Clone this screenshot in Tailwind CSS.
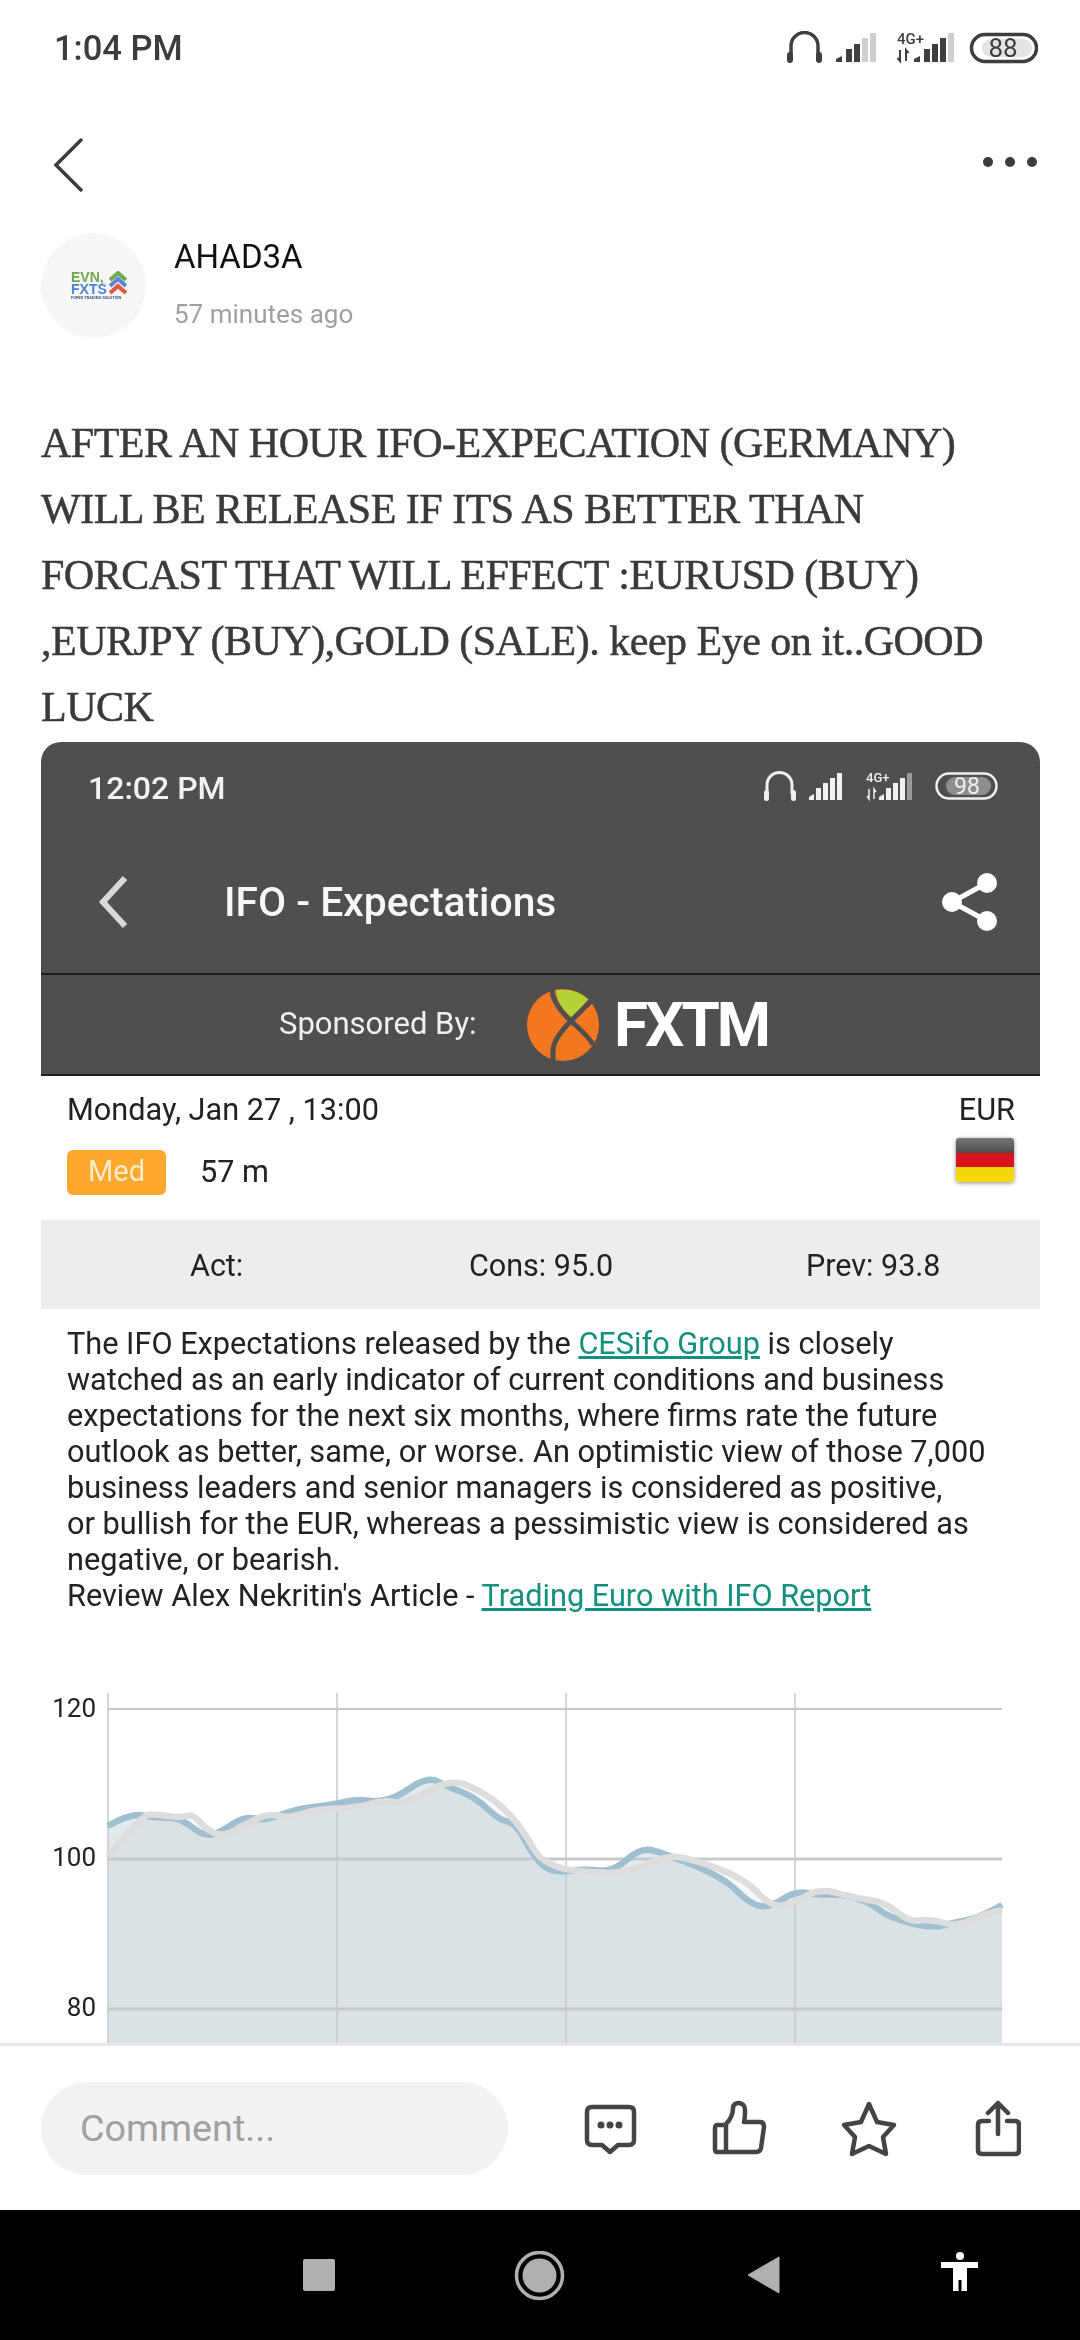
<!DOCTYPE html>
<html lang="en">
<head>
<meta charset="utf-8">
<title>Post</title>
<script src="https://cdn.jsdelivr.net/npm/@tailwindcss/browser@4"></script>
</head>
<body class="bg-white">
<div class="w-[1080px] h-[2340px] flex flex-col overflow-hidden font-['Roboto',sans-serif] text-[#222]">
  <main class="h-[2043px] overflow-hidden">
    <!-- status bar -->
    <div class="h-[96px] flex items-center justify-between pl-[54px] pr-[42px]">
      <span class="text-[34.500px] font-medium text-[#3c3c3c] pt-[2px]">1:04 PM</span>
      <div class="flex items-center">
        <svg width="251" height="34" viewBox="787 31 251 34" class="text-[#3e3e3e]">
          <path d="M791 56V46a13.500 13.500 0 0 1 27 0V56" fill="none" stroke="currentColor" stroke-width="3.500"/>
          <rect x="787" y="52" width="6" height="11" rx="3" fill="currentColor"/>
          <rect x="816" y="52" width="6" height="11" rx="3" fill="currentColor"/>
          <path d="M836 62v-3l6-3v6z" fill="currentColor"/>
          <rect x="846" y="49" width="6" height="13" fill="currentColor"/>
          <rect x="854" y="44" width="6" height="18" fill="currentColor"/>
          <rect x="862" y="38" width="6" height="24" fill="#cfcfcf"/>
          <rect x="870" y="33" width="6" height="29" fill="#cfcfcf"/>
          <text x="897" y="44" font-size="15" font-weight="500" fill="currentColor" font-family="Roboto">4G+</text>
          <path d="M900 50v11l-2.500-3M906 61V50l2.500 3" fill="none" stroke="currentColor" stroke-width="2"/>
          <path d="M914 62v-3l6-3v6z" fill="currentColor"/>
          <rect x="924" y="49" width="6" height="13" fill="currentColor"/>
          <rect x="932" y="44" width="6" height="18" fill="currentColor"/>
          <rect x="940" y="38" width="6" height="24" fill="currentColor"/>
          <rect x="948" y="33" width="6" height="29" fill="#cfcfcf"/>
          <rect x="971.500" y="34.500" width="65" height="27" rx="13.500" fill="none" stroke="currentColor" stroke-width="3.500"/>
          <rect x="982" y="39" width="50" height="18" rx="9" fill="#e4e4e4"/>
          <text x="1003" y="57" font-size="26" text-anchor="middle" fill="currentColor" font-family="Roboto">88</text>
        </svg>
      </div>
    </div>
    <!-- nav -->
    <div class="h-[137px] flex items-center justify-between pl-[53px] pr-[43px]">
      <svg width="30" height="54" viewBox="0 0 30 54"><path d="M28 2 3 27l25 25" fill="none" stroke="#3c3c3c" stroke-width="3.500" stroke-linecap="round"/></svg>
      <div class="flex gap-[12px] -mt-[6px]">
        <span class="w-[10px] h-[10px] rounded-full bg-[#3c3c3c]"></span>
        <span class="w-[10px] h-[10px] rounded-full bg-[#3c3c3c]"></span>
        <span class="w-[10px] h-[10px] rounded-full bg-[#3c3c3c]"></span>
      </div>
    </div>
    <!-- author -->
    <div class="h-[105px] flex pl-[41px]">
      <div class="w-[105px] h-[105px] rounded-full bg-[#f7f7f7] flex flex-col items-start pl-[30px] pt-[38px]">
        <div class="flex items-center gap-[2px]">
          <div class="flex flex-col leading-[12px] font-['Liberation_Sans',sans-serif] font-bold text-[14px]">
            <span class="text-[#6fa84f]">EVN,</span>
            <span class="text-[#4a86d8]">FXTS</span>
          </div>
          <svg width="18" height="24" viewBox="0 0 18 24" fill="none" stroke-width="4"><path d="M1 9 9 2l8 7" stroke="#6fa84f"/><path d="M1 15l8-7 8 7" stroke="#5b86d8"/><path d="M1 22l8-7 8 7" stroke="#e2563f"/></svg>
        </div>
        <span class="text-[4px] leading-[5px] font-bold text-[#44557a] whitespace-nowrap">FOREX TRADING SOLUTION</span>
      </div>
      <div class="ml-[28px] flex flex-col">
        <span class="text-[33px] leading-[38px] mt-[5px] text-[#111]">AHAD3A</span>
        <span class="text-[26px] leading-[30px] mt-[23px] text-[#a0a0a0]">57 minutes ago</span>
      </div>
    </div>
    <!-- post text -->
    <p class="mt-[72px] pl-[41px] text-[42px] leading-[66px] tracking-[-0.5px] text-[#3a3a3a] font-['Liberation_Serif',serif] [-webkit-text-stroke:0.5px_#3a3a3a] whitespace-nowrap">AFTER AN HOUR IFO-EXPECATION (GERMANY)<br>WILL BE RELEASE IF ITS AS BETTER THAN<br>FORCAST THAT WILL EFFECT :EURUSD (BUY)<br>,EURJPY (BUY),GOLD (SALE). keep Eye on it..GOOD<br>LUCK</p>
    <!-- card -->
    <div class="mt-[2px] mx-[41px] w-[999px] rounded-t-[20px] overflow-hidden">
      <div class="bg-[#4f4f4f] text-white">
        <div class="h-[88px] flex items-center justify-between pl-[47px] pr-[41px]">
          <span class="text-[32px] font-medium text-[#f2f2f2] pt-[3px]">12:02 PM</span>
          <svg width="236" height="32" viewBox="0 0 236 32" class="text-[#f0f0f0]">
            <path d="M4 24V15a12.500 12.500 0 0 1 25 0V24" fill="none" stroke="currentColor" stroke-width="3"/>
            <rect x="1" y="20" width="5" height="11" rx="2.500" fill="currentColor"/>
            <rect x="28" y="20" width="5" height="11" rx="2.500" fill="currentColor"/>
            <path d="M46 30v-3l5-3v6z" fill="currentColor"/>
            <rect x="53" y="18" width="5" height="12" fill="currentColor"/>
            <rect x="60" y="13" width="5" height="17" fill="currentColor"/>
            <rect x="67" y="8" width="5" height="22" fill="currentColor"/>
            <rect x="74" y="3" width="5" height="27" fill="currentColor"/>
            <text x="103" y="12" font-size="13" font-weight="500" fill="currentColor" font-family="Roboto">4G+</text>
            <path d="M106 19v10l-2-3M111 29V19l2 3" fill="none" stroke="currentColor" stroke-width="1.500"/>
            <path d="M116 30v-3l5-3v6z" fill="currentColor"/>
            <rect x="123" y="18" width="5" height="12" fill="currentColor"/>
            <rect x="130" y="13" width="5" height="17" fill="currentColor"/>
            <rect x="137" y="8" width="5" height="22" fill="currentColor"/>
            <rect x="144" y="3" width="5" height="27" fill="#9a9a9a"/>
            <rect x="173.500" y="3.500" width="60" height="25" rx="12.500" fill="none" stroke="currentColor" stroke-width="2.500"/>
            <rect x="183" y="7" width="45" height="18" rx="9" fill="#8e8e8e"/>
            <text x="204" y="24" font-size="23" text-anchor="middle" fill="currentColor" font-family="Roboto">98</text>
          </svg>
        </div>
        <div class="h-[145px] flex items-center justify-between pl-[57px] pr-[41px] border-b-[2px] border-[#1f1f1f]">
          <div class="flex items-center">
            <svg width="30" height="54" viewBox="0 0 30 54"><path d="M27 3 5 27l22 24" fill="none" stroke="#d8d8d8" stroke-width="6"/></svg>
            <span class="ml-[96px] text-[40.800px] font-medium text-[#f7f7f7] pt-[3px]">IFO - Expectations</span>
          </div>
          <svg width="58" height="60" viewBox="0 0 58 60"><g fill="#fff"><circle cx="46" cy="11" r="10"/><circle cx="46" cy="49" r="10"/><circle cx="11" cy="30" r="10"/></g><path d="M46 11 11 30l35 19" fill="none" stroke="#fff" stroke-width="5"/></svg>
        </div>
        <div class="h-[101px] flex items-center pl-[238px] border-b-[2px] border-[#1f1f1f]">
          <span class="w-[247px] text-[31px] text-[#f0f0f0]">Sponsored By:</span>
          <svg width="74" height="74" viewBox="525 987 74 74">
            <circle cx="562" cy="1024" r="36" fill="#f37721"/>
            <path d="M555 989Q575 987 587 998L571 1017Q556 1004 555 989z" fill="#b5d334"/>
            <path d="M551 986Q550 1002 570 1020T592 1044M590 1000 570 1020Q552 1038 552 1050V1062" fill="none" stroke="#4f4f4f" stroke-width="5"/>
          </svg>
          <span class="ml-[14px] text-[62px] leading-none font-bold text-white tracking-[-3px]">FXTM</span>
        </div>
      </div>
      <!-- details -->
      <div class="h-[144px] flex justify-between pl-[26px] pr-[25px] bg-white text-[#222]">
        <div>
          <div class="text-[30.700px] leading-[36px] mt-[16px]">Monday, Jan 27 , 13:00</div>
          <div class="flex items-center mt-[21px]">
            <span class="w-[99px] h-[45px] rounded-[6px] bg-[#ffa82e] flex items-center justify-center text-[29px] text-[#ffeccb]">Med</span>
            <span class="ml-[34px] text-[30.700px]">57 m</span>
          </div>
        </div>
        <div class="flex flex-col items-end">
          <div class="text-[30.700px] leading-[36px] mt-[16px]">EUR</div>
          <div class="mt-[10px] mr-[1px] w-[58px] h-[44px] rounded-[3px] overflow-hidden shadow-[0_1px_4px_rgba(0,0,0,0.45)] flex flex-col">
            <span class="flex-1 bg-[linear-gradient(#777,#4a4a4a)]"></span>
            <span class="flex-1 bg-[#d8141f]"></span>
            <span class="flex-1 bg-[#f6d70c]"></span>
          </div>
        </div>
      </div>
      <div class="h-[89px] bg-[#eeedee] grid grid-cols-3 items-center text-[30.500px] text-[#222] pt-[3px]">
        <span class="pl-[149px]">Act:</span>
        <span class="pl-[95px]">Cons: 95.0</span>
        <span class="pl-[99px]">Prev: 93.8</span>
      </div>
      <p class="pt-[17px] pl-[26px] pr-[26px] text-[30.700px] leading-[36px] text-[#222] bg-white whitespace-nowrap">The IFO Expectations released by the <span class="text-[#14907f] underline">CESifo Group</span> is closely<br>watched as an early indicator of current conditions and business<br>expectations for the next six months, where firms rate the future<br>outlook as better, same, or worse. An optimistic view of those 7,000<br>business leaders and senior managers is considered as positive,<br>or bullish for the EUR, whereas a pessimistic view is considered as<br>negative, or bearish.<br>Review Alex Nekritin's Article - <span class="text-[#14907f] underline">Trading Euro with IFO Report</span></p>
      <!-- chart -->
      <svg width="999" height="429" viewBox="41 1614 999 429" class="block bg-white">
        <path class="mix-blend-multiply" fill="#f7f7f7" d="M108 1857Q141 1815 149 1814.500Q157 1814 168.500 1816Q180 1818 186.500 1816Q193 1814 200 1822Q207 1830 215.500 1833.500Q224 1837 239.500 1828Q255 1819 262.500 1816.500Q270 1814 279.500 1816Q289 1818 303 1813.500Q317 1809 337.500 1808.500Q358 1808 370 1804Q382 1800 394 1802Q406 1804 428.500 1791Q451 1778 466.500 1785Q482 1792 492.500 1799.500Q503 1807 513 1818.500Q523 1830 533.500 1848.500Q544 1867 575 1870.500Q606 1874 620 1872Q634 1870 649.500 1863Q665 1856 677 1857Q689 1858 716.500 1868Q744 1878 757.500 1892.500Q771 1907 781.500 1905.500Q792 1904 806 1896Q820 1888 837 1893Q854 1898 869.500 1900Q885 1902 897 1912Q909 1922 920 1920.500Q931 1919 944 1923Q957 1927 969 1921Q981 1915 1002 1910V2043H108z"/>
        <path class="mix-blend-multiply" fill="#e2eaee" d="M108 1826Q131 1813 143 1815.500Q155 1818 167 1817.500Q179 1817 191 1826.500Q203 1836 211.500 1834.500Q220 1833 232 1824.500Q244 1816 254.500 1818.500Q265 1821 280.500 1815Q296 1809 313.500 1807Q331 1805 344.500 1802Q358 1799 366.500 1800.500Q375 1802 385.500 1800Q396 1798 412 1787Q428 1776 438 1781.500Q448 1787 461.500 1792Q475 1797 487 1808.500Q499 1820 507.500 1821.500Q516 1823 525 1840Q534 1857 542.500 1865Q551 1873 568 1871Q585 1869 599 1870.500Q613 1872 626.500 1860Q640 1848 650.500 1850Q661 1852 692 1864.500Q723 1877 737 1891Q751 1905 761 1906Q771 1907 783 1899Q795 1891 807.500 1893Q820 1895 832 1894.500Q844 1894 857.500 1898.500Q871 1903 879.500 1910Q888 1917 909 1922.500Q930 1928 942 1925.500Q954 1923 967.500 1920Q981 1917 1002 1905V2043H108z"/>
        <g stroke="#c6c9cc" stroke-width="1.500">
          <path d="M108 1693V2043M337 1693V2043M566 1693V2043M795 1693V2043"/>
          <path d="M108 1709H1002" stroke-width="2"/>
          <path d="M108 1859H1002M108 2009H1002" stroke-width="3"/>
        </g>
        <path fill="none" stroke="#9fc0d0" stroke-width="6.500" d="M108 1826Q131 1813 143 1815.500Q155 1818 167 1817.500Q179 1817 191 1826.500Q203 1836 211.500 1834.500Q220 1833 232 1824.500Q244 1816 254.500 1818.500Q265 1821 280.500 1815Q296 1809 313.500 1807Q331 1805 344.500 1802Q358 1799 366.500 1800.500Q375 1802 385.500 1800Q396 1798 412 1787Q428 1776 438 1781.500Q448 1787 461.500 1792Q475 1797 487 1808.500Q499 1820 507.500 1821.500Q516 1823 525 1840Q534 1857 542.500 1865Q551 1873 568 1871Q585 1869 599 1870.500Q613 1872 626.500 1860Q640 1848 650.500 1850Q661 1852 692 1864.500Q723 1877 737 1891Q751 1905 761 1906Q771 1907 783 1899Q795 1891 807.500 1893Q820 1895 832 1894.500Q844 1894 857.500 1898.500Q871 1903 879.500 1910Q888 1917 909 1922.500Q930 1928 942 1925.500Q954 1923 967.500 1920Q981 1917 1002 1905"/>
        <path fill="none" stroke="#dddddd" stroke-width="6.500" d="M108 1857Q141 1815 149 1814.500Q157 1814 168.500 1816Q180 1818 186.500 1816Q193 1814 200 1822Q207 1830 215.500 1833.500Q224 1837 239.500 1828Q255 1819 262.500 1816.500Q270 1814 279.500 1816Q289 1818 303 1813.500Q317 1809 337.500 1808.500Q358 1808 370 1804Q382 1800 394 1802Q406 1804 428.500 1791Q451 1778 466.500 1785Q482 1792 492.500 1799.500Q503 1807 513 1818.500Q523 1830 533.500 1848.500Q544 1867 575 1870.500Q606 1874 620 1872Q634 1870 649.500 1863Q665 1856 677 1857Q689 1858 716.500 1868Q744 1878 757.500 1892.500Q771 1907 781.500 1905.500Q792 1904 806 1896Q820 1888 837 1893Q854 1898 869.500 1900Q885 1902 897 1912Q909 1922 920 1920.500Q931 1919 944 1923Q957 1927 969 1921Q981 1915 1002 1910"/>
        <g font-family="Roboto" font-size="26" fill="#222" text-anchor="end">
          <text x="96" y="1717">120</text>
          <text x="96" y="1866">100</text>
          <text x="96" y="2016">80</text>
        </g>
      </svg>
    </div>
  </main>
  <!-- bottom bar -->
  <div class="h-[167px] border-t-[3px] border-[#e6e6ea] flex items-start pl-[41px]">
    <div class="mt-[36px] w-[467px] h-[93px] rounded-full bg-[#f3f3f3] flex items-center pl-[39px] text-[37.700px] text-[#a0a0a0]">Comment...</div>
    <svg class="ml-[68px] mt-[54px]" width="445" height="60" viewBox="576 2100 445 60" fill="none" stroke="#444" stroke-width="4.500" stroke-linejoin="round" stroke-linecap="round">
      <path d="M592 2107H629Q634 2107 634 2112V2140Q634 2145 629 2145H618L610 2152 602 2145H592Q587 2145 587 2140V2112Q587 2107 592 2107z"/>
      <g fill="#444" stroke="none"><circle cx="601" cy="2125" r="3.500"/><circle cx="610" cy="2125" r="3.500"/><circle cx="619" cy="2125" r="3.500"/></g>
      <path d="M726 2124C732 2118 733 2112 733 2108C733 2101 745 2101 745 2110C745 2114 745 2118 744 2122H760C763 2122 764 2124 764 2127L761 2148C760.500 2151 759 2152 756 2152H717C715.500 2152 715 2151 715 2149V2128C715 2125.500 716 2125 718 2125H726V2152"/>
      <path d="M869 2104 877 2122 894 2125 883 2137 886 2154 869 2146 852 2154 855 2137 844 2125 861 2122z"/>
      <path d="M989 2121H982Q978 2121 978 2125V2150Q978 2154 982 2154H1015Q1019 2154 1019 2150V2125Q1019 2121 1015 2121H1007"/>
      <path d="M998 2134V2103M988 2113 998 2103 1008 2113"/>
    </svg>
  </div>
  <!-- nav bar -->
  <div class="h-[130px] bg-black flex items-start pl-[303px]">
    <svg class="mt-[41px]" width="680" height="50" viewBox="303 2251 680 50">
      <rect x="303" y="2259" width="32" height="32" rx="2" fill="#b0b0b0"/>
      <circle cx="539.500" cy="2275.500" r="23" fill="none" stroke="#b0b0b0" stroke-width="3.500"/>
      <circle cx="539.500" cy="2275.500" r="17" fill="#b0b0b0"/>
      <path d="M779 2257V2293L748 2275z" fill="#b0b0b0" stroke="#b0b0b0" stroke-width="1" stroke-linejoin="round"/>
      <circle cx="960" cy="2256" r="4" fill="#fff"/>
      <path d="M941 2262H978V2268H967V2291H961.500V2280H958.500V2291H953V2268H941z" fill="#fff"/>
    </svg>
  </div>
</div>
</body>
</html>
